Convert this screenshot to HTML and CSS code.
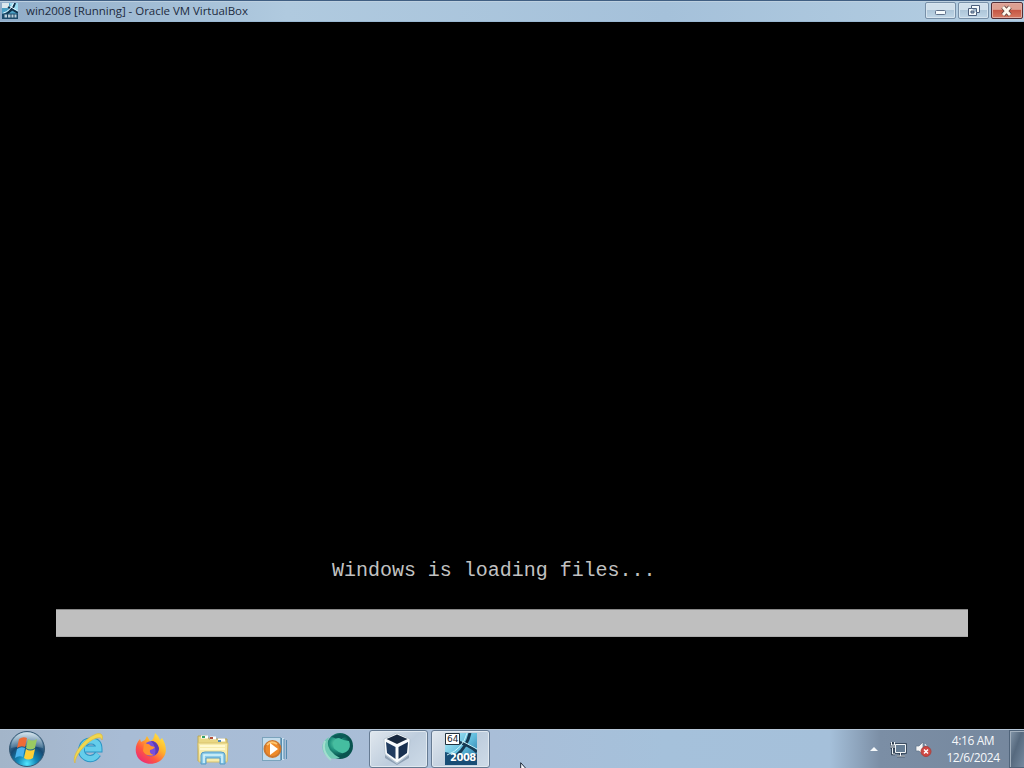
FILE: index.html
```html
<!DOCTYPE html>
<html lang="en">
<head>
<meta charset="utf-8">
<title>win2008 [Running] - Oracle VM VirtualBox</title>
<link rel="stylesheet" href="styles.css">
</head>
<body>
<div class="desktop">
  <header class="titlebar">
    <svg class="title-icon" width="16" height="16" viewBox="0 0 32 32">
      <rect width="32" height="32" fill="#4b9fc4"/><path d="M0 0h14v10H0z" fill="#dce8ee"/>
      <path d="M15 0h17v14L20 12z" fill="#9bddf3"/><path d="M4 24Q22 16 26 0M12 8l20 12" stroke="#12324b" stroke-width="4" fill="none"/>
      <path d="M1 21Q18 15 23 0M16 7l16 9" stroke="#e8f8ff" stroke-width="2" fill="none"/><path d="M0 21h32v11H0z" fill="#1b4a6a"/>
      <path d="M5 26h5m2 0h5m2 0h4m2 0h4" stroke="#b9cdd9" stroke-width="6"/>
    </svg>
    <span class="title-text">win2008 [Running] - Oracle VM VirtualBox</span>
    <div class="window-controls">
      <button class="control" aria-label="Minimize"><svg width="14" height="14"><rect x="1.500" y="6.500" width="10" height="4" rx="1" fill="#f5fafc" stroke="#607089"/></svg></button>
      <button class="control" aria-label="Restore"><svg width="14" height="14"><path d="M4.500 1.500h8v7h-3v3h-8v-7h3z" fill="#f5fafc" stroke="#4c5f7c"/><path d="M4.500 4.500h5v4M4 7h3v2H4z" fill="#9eb7cb" stroke="#4c5f7c"/></svg></button>
      <button class="control close" aria-label="Close"><svg width="14" height="14"><path d="M3 3l7 8M10 3l-7 8" stroke="#62443f" stroke-width="4.500"/><path d="M3 3l7 8M10 3l-7 8" stroke="#fff8ed" stroke-width="2.800"/></svg></button>
    </div>
  </header>
  <main class="screen">
    <p class="loading-text">Windows is loading files...</p>
    <div class="progress"></div>
  </main>
  <footer class="taskbar">
    <button class="start" aria-label="Start">
      <svg width="40" height="38" viewBox="0 0 40 38">
        <defs><radialGradient id="orb" cx=".5" cy=".92" r=".9"><stop offset="0" stop-color="#54e7ff"/><stop offset=".3" stop-color="#1388b8"/><stop offset=".6" stop-color="#174a73"/><stop offset="1" stop-color="#789db8"/></radialGradient>
        <linearGradient id="shine" x2="0" y2="1"><stop stop-color="#e8f3f8" stop-opacity=".85"/><stop offset="1" stop-color="#a6c0d0" stop-opacity=".25"/></linearGradient></defs>
        <circle cx="20" cy="19" r="17.500" fill="url(#orb)" stroke="#385a75"/>
        <path d="M4 18C4-3 36-3 36 18Q20 14 4 18z" fill="url(#shine)"/>
        <path d="M12 9Q16 6 20 8l-2 9q-4-2-8 1z" fill="#ee6c37"/><path d="M21 9q4 3 9 0l-2 9q-5 3-9 0z" fill="#9aca62"/>
        <path d="M10 19q4-3 8-1l-2 9q-4-2-8 1z" fill="#4ab3ee"/><path d="M19 19q4 3 9 0l-2 9q-5 3-9 0z" fill="#ffcf35"/>
      </svg>
    </button>
    <nav class="apps">
      <button class="app" aria-label="Internet Explorer">
        <svg width="34" height="34" viewBox="0 0 34 34">
          <path d="M26 22Q21 29 14 25.500 8 22 10 15.500 12 9 19 9q8 0 8 8H13" fill="none" stroke="#2b94c5" stroke-width="7"/>
          <path d="M26 22Q21 29 14 25.500 8 22 10 15.500 12 9 19 9q8 0 8 8H13" fill="none" stroke="#65cdeb" stroke-width="5"/>
          <path d="M3 31C-1 25 10 8 22 3c6-3 10-1 8 5-1-4-6-2-10 0C12 13 3 24 3 31z" fill="#f0d750" stroke="#d8b13c" stroke-width=".6"/>
        </svg>
      </button>
      <button class="app" aria-label="Firefox">
        <svg width="32" height="34" viewBox="0 0 32 34">
          <defs><linearGradient id="fox" x1="1" x2=".2" y2="1"><stop stop-color="#fff44f"/><stop offset=".42" stop-color="#ffb32b"/><stop offset=".7" stop-color="#ff5940"/><stop offset="1" stop-color="#eb267a"/></linearGradient></defs>
          <path d="M5 7l1 3 4-2 2-4 3 5q4-1 5-8 4 3 5 7l2-2c5 8 5 15 1 20-5 7-18 8-24 1C-1 21 0 12 5 7z" fill="url(#fox)"/>
          <path d="M11 11q8-5 12 3 2 7-4 10-8 2-10-5l5-2z" fill="#7650dd"/><path d="M9 12q5-1 7 2l4 1q-2 3-5 3-1 4 4 5-8 2-11-4z" fill="#ff922e"/><path d="M16 9q6 0 8 7 0 5-4 7 2-8-4-14z" fill="#5e3cb4"/>
        </svg>
      </button>
      <button class="app explorer" aria-label="Windows Explorer">
        <svg width="34" height="32" viewBox="0 0 34 32">
          <path d="M2 5V2h9l2 3h18v22H2z" fill="#e9d783" stroke="#b9a85d"/>
          <path d="M5 3h7M14 4h6M22 6h7" stroke="#fff" stroke-width="3"/><path d="M6 3h3" stroke="#34a16a" stroke-width="2"/><path d="M14 4h3" stroke="#b54c37" stroke-width="2"/><path d="M22 7h3" stroke="#508db9" stroke-width="2"/>
          <path d="M2 9h30l-1 19H3z" fill="#f7ecac" stroke="#d9c26d"/><path d="M4 12h25M4 15h25" stroke="#fff9d0" stroke-width="2"/>
          <path d="M5 30V21q0-3 4-3h16q4 0 4 3v9h-5v-6H10v6z" fill="#8ccce9" stroke="#559ac5"/><path d="M8 29v-8h18v8" fill="none" stroke="#d9f5fc" stroke-width="1.500"/>
        </svg>
      </button>
      <button class="app" aria-label="Windows Media Player">
        <svg width="30" height="28" viewBox="0 0 30 28">
          <path d="M8 3h16v22H8z" fill="#c9e1f0"/><path d="M21.500 3v22M24 4v20M26.500 5v19" stroke="#568caf"/><rect x="2.500" y="2.500" width="18" height="23" fill="#c3dcec" stroke="#7ba3bc"/>
          <circle cx="12.500" cy="14" r="8" fill="#ee8a2a" stroke="#cb7730" stroke-width="2"/><path d="M7 10q4-5 10-1" stroke="#ffc66e" fill="none" stroke-width="2"/><path d="M10 8l8 6-8 6z" fill="#fff"/>
        </svg>
      </button>
      <button class="app globe" aria-label="Globe">
        <svg width="34" height="34" viewBox="0 0 34 34">
          <defs><radialGradient id="globe" cx=".35" cy=".4"><stop stop-color="#64d8b3"/><stop offset=".48" stop-color="#239681"/><stop offset="1" stop-color="#08534f"/></radialGradient></defs>
          <circle cx="20" cy="15" r="13" fill="url(#globe)"/><path d="M11 6q9-6 16 0-5 0-7 4-6-4-9-4z" fill="#0b5956"/>
          <path d="M14 12q0-5 5-5 5 3 10 3 3 7-3 11-5 3-10-2-4-2-2-7z" fill="#45bda0"/><path d="M9 6q-3 7 1 13 4 5 10 8Q9 30 4 22-1 12 9 6z" fill="#70cbb5"/><path d="M5 10q-4 10 6 19" stroke="#a3ddcf" fill="none" stroke-width="2"/>
        </svg>
      </button>
      <button class="app open box" aria-label="Oracle VM VirtualBox">
        <svg width="30" height="32" viewBox="0 0 30 32">
          <path d="M3 22l12 9 12-9v3l-12 7-12-7z" fill="#6c8096" opacity=".6"/><path d="M15 0l13 6-1 15-12 9-12-9L2 6z" fill="#f8fbfd" stroke="#aebdca" stroke-width=".7"/>
          <path d="M15 1.500L25.500 6 15 11 4.500 6z" fill="#17283e"/><path d="M4 9l9.500 5v12L5 20z" fill="#203c60"/><path d="M26 9l-9.500 5v12l8.500-6z" fill="#18304f"/>
        </svg>
      </button>
      <button class="app open" aria-label="win2008">
        <svg width="32" height="32" viewBox="0 0 32 32">
          <defs><linearGradient id="server" x2="1" y2="1"><stop stop-color="#baf1fc"/><stop offset=".5" stop-color="#62bddd"/><stop offset="1" stop-color="#1c6798"/></linearGradient></defs>
          <rect width="32" height="32" fill="url(#server)"/><path d="M0 19l13 3 19-1v11H0z" fill="#194e76"/><path d="M11 23Q22 14 25 0M13 9q12 3 19 10" fill="none" stroke="#163a53" stroke-width="3"/><path d="M2 22Q18 16 22 0M17 8l15 8" fill="none" stroke="#c8f3fb"/>
          <path d="M.5.5h14v11H.5z" fill="#fff" stroke="#21313d"/><text class="bits" x="2" y="9">64</text><text class="year" x="5" y="28">2008</text>
        </svg>
      </button>
    </nav>
    <div class="tray">
      <svg class="tray-arrow" width="8" height="5"><path d="M0 4L4 0l4 4z" fill="#f5f8fa"/></svg>
      <svg class="network" width="17" height="17" viewBox="0 0 17 17"><path d="M5.500 3.500h10v8h-10zM10.500 12v3M7 15h8M2.500 1v3M0 3.500h5v3H.5M2.500 7v6H5" fill="none" stroke="#29394b" stroke-width="2.500"/><path d="M5.500 3.500h10v8h-10z" fill="#667d94" stroke="#f1f5f7"/><path d="M10.500 12v3M7 15h8M1.500 1v3M4.500 1v3M.5 4h5v2H.5M2.500 7v6H5" fill="none" stroke="#f1f5f7"/></svg>
      <svg class="sound" width="17" height="17" viewBox="0 0 17 17"><path d="M1 5h3l4-4v13l-4-4H1z" fill="#f5f5f5" stroke="#62758b" stroke-width=".7"/><path d="M10 3q3 3 1 6" stroke="#f5f5f5" fill="none"/><circle cx="11" cy="10.500" r="5" fill="#cf4642" stroke="#a9433f"/><path d="M9 8.500l4 4m0-4l-4 4" stroke="#fff" stroke-width="1.500"/></svg>
      <div class="clock"><span class="time">4:16 AM</span><span class="date">12/6/2024</span></div>
    </div>
    <div class="show-desktop"></div>
  </footer>
  <svg class="cursor" width="10" height="16" viewBox="0 0 10 16"><path d="M.7.7v13l3-3 2 5 2-1-2-4h4z" fill="#f5f8fc" stroke="#1a2635"/></svg>
</div>
</body>
</html>
```
FILE: styles.css
```css
* { box-sizing: border-box; }
body { margin: 0; background: #000; overflow: hidden; }
button { border: 0; padding: 0; background: none; display: flex; align-items: center; justify-content: center; }
svg { display: block; flex: none; }
.desktop { position: relative; width: 1024px; height: 768px; overflow: hidden; display: flex; flex-direction: column; }
.titlebar { height: 22px; flex: none; display: flex; align-items: center; padding-left: 2px; background: linear-gradient(90deg, #91adc9, #b0cadf 28%, #a5c1da 65%, #b4cee2); border-top: 1px solid #405f83; box-shadow: inset 0 1px #bdd0e0, inset 0 -1px #9bb9d4; }
.title-icon { margin-bottom: 1px; }
.title-text { margin-left: 8px; font: 11.5px/20px "Open Sans", "Noto Sans", sans-serif; color: #1d2b3e; white-space: nowrap; letter-spacing: -.03px; padding-bottom: 1px; }
.window-controls { margin-left: auto; display: flex; gap: 2px; align-self: flex-start; padding: 1px 1px 0 0; }
.control { width: 31px; height: 17px; border: 1px solid #7890a8; border-radius: 2px; background: linear-gradient(#d0dfeb 0 45%, #aec6d9 50%, #c0d6e7); box-shadow: inset 0 0 0 1px #d6e4ef; }
.close { width: 32px; border-color: #532e36; background: linear-gradient(#dda092 0 42%, #c65745 50%, #d67861); box-shadow: inset 0 0 0 1px #e1aaa0; }
.screen { flex: 1; display: flex; flex-direction: column; background: #000; padding: 537px 56px 0; }
.loading-text { margin: 0 0 0 276px; font: 20px/24px "Liberation Mono", monospace; letter-spacing: -.02px; color: #c2c2c2; white-space: nowrap; }
.progress { height: 28px; margin-top: 26px; background: #bfbfbf; border-top: 1px solid #898989; border-bottom: 1px solid #aaa; }
.taskbar { height: 39px; flex: none; display: flex; align-items: stretch; background: linear-gradient(90deg, #a3b5c9, #a8bcd5 12%, #a9bed8 48%, #a5c1db 65%, #a5c0da 81%, #7b8ea5 86%, #75879d); border-top: 1px solid #b8c8d9; }
.start { width: 54px; }
.apps { display: flex; gap: 3px; padding-left: 5px; }
.app { width: 59px; height: 38px; }
.explorer { padding: 2px 0 0 1px; }
.globe { padding-bottom: 3px; }
.open { border: 1px solid #667b93; border-radius: 3px; background: linear-gradient(135deg, #e0e7ee, #becddd 55%, #cedbe8); box-shadow: inset 0 0 0 1px #e1e9f0; }
.box { padding-right: 3px; }
.bits { font: 9px "DejaVu Sans", sans-serif; fill: #17242d; }
.year { font: bold 10px "DejaVu Sans", sans-serif; fill: #fff; letter-spacing: -.5px; }
.tray { margin-left: auto; display: flex; align-items: center; padding-right: 9px; }
.tray-arrow { margin-right: 12px; }
.network { margin-right: 8px; }
.sound { margin-right: 14px; }
.clock { width: 54px; display: flex; flex-direction: column; align-items: center; color: #f5f7fa; font: 12px/17px "Open Sans", "Noto Sans", sans-serif; white-space: nowrap; letter-spacing: -.4px; }
.show-desktop { width: 15px; border: 1px solid #50647a; border-right: 0; background: linear-gradient(110deg, #8497aa, #56697e 45%, #75899f); box-shadow: inset 1px 1px #a1afbd; }
.cursor { position: absolute; left: 520px; top: 762px; }
```
